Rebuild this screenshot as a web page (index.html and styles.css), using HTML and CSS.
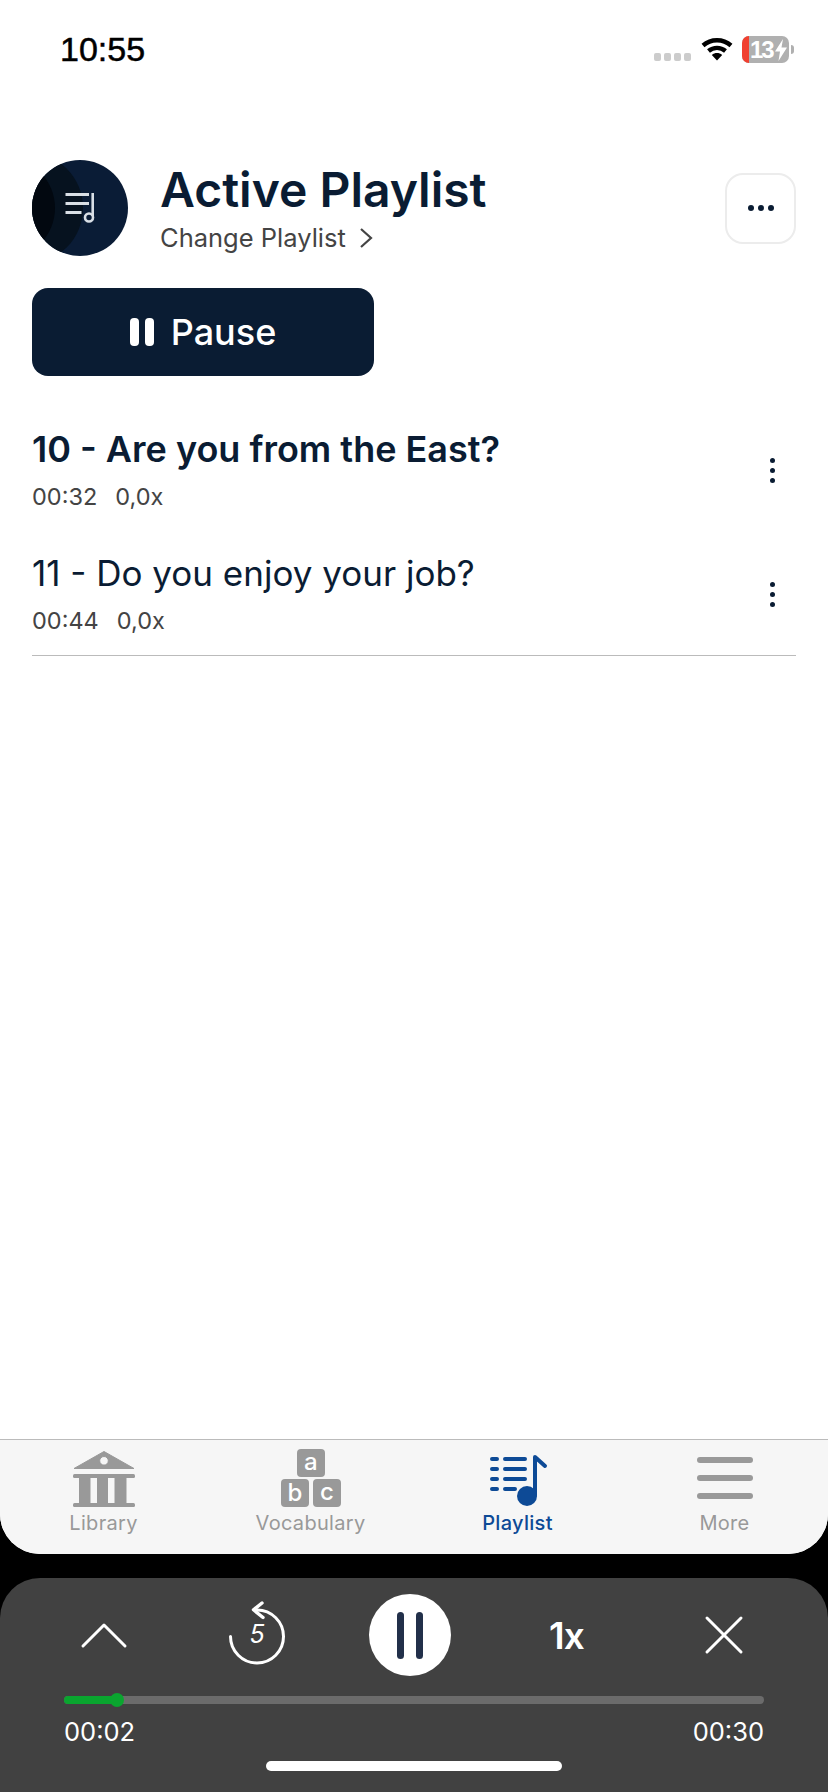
FILE: index.html
```html
<!DOCTYPE html>
<html lang="en">
<head>
    <meta charset="UTF-8">
    <meta name="viewport" content="width=device-width, initial-scale=1.0">
    <title>Active Playlist</title>
    <link rel="stylesheet" href="styles.css">
</head>
<body>
    <div class="app">
        <div class="screen">
            <div class="status-bar">
                <span class="clock">10:55</span>
                <div class="status-icons">
                    <div class="signal"><i></i><i></i><i></i><i></i></div>
                    <svg class="wifi" viewBox="0 0 32 24" width="32" height="24">
                        <path d="M2 8.500C10 1.500 22 1.500 30 8.500" fill="none" stroke="#000" stroke-width="4.400"/>
                        <path d="M7.500 14C12.500 9.800 19.500 9.800 24.500 14" fill="none" stroke="#000" stroke-width="4.400"/>
                        <path d="M10.800 18L16 23.600L21.200 18C18 15.400 14 15.400 10.800 18Z" fill="#000"/>
                    </svg>
                    <div class="battery">
                        <div class="battery-low"></div>
                        <span class="battery-text">13</span>
                        <svg class="bolt" viewBox="0 0 12 22" width="12" height="22">
                            <path d="M8 0L0 12.500H5L3.500 22L12 8.500H6.500Z" fill="#fff"/>
                        </svg>
                    </div>
                    <div class="battery-nub"></div>
                </div>
            </div>

            <main class="content">
                <header class="head">
                    <svg class="avatar" viewBox="0 0 96 96" width="96" height="96">
                        <defs><clipPath id="disc"><circle cx="48" cy="48" r="48"/></clipPath></defs>
                        <g clip-path="url(#disc)">
                            <rect width="96" height="96" fill="#0a1c36"/>
                            <circle cx="-5" cy="48" r="56" fill="#06121f"/>
                            <circle cx="-28" cy="48" r="51" fill="#020810"/>
                        </g>
                        <path d="M33.500 34.500H57M33.500 43.500H57M33.500 52.500H49.500" fill="none" stroke="#d9dfe6" stroke-width="3"/>
                        <path d="M60.700 33V56" fill="none" stroke="#d9dfe6" stroke-width="2.600"/>
                        <circle cx="57" cy="57.500" r="4" fill="none" stroke="#d9dfe6" stroke-width="2.600"/>
                    </svg>
                    <div class="head-text">
                        <h1>Active Playlist</h1>
                        <div class="change">
                            <span>Change Playlist</span>
                            <svg viewBox="0 0 14 22" width="14" height="22">
                                <path d="M2 2L12 11L2 20" fill="none" stroke="#444" stroke-width="2.200"/>
                            </svg>
                        </div>
                    </div>
                    <button class="more-btn" type="button" aria-label="More">
                        <i></i><i></i><i></i>
                    </button>
                </header>

                <button class="pause-btn" type="button">
                    <span class="pause-bars"><i></i><i></i></span>
                    Pause
                </button>

                <div class="tracks">
                    <div class="track">
                        <div class="track-info">
                            <div class="track-title active">10 - Are you from the East?</div>
                            <div class="track-meta"><span>00:32</span><span>0,0x</span></div>
                        </div>
                        <div class="kebab"><i></i><i></i><i></i></div>
                    </div>
                    <div class="track">
                        <div class="track-info">
                            <div class="track-title">11 - Do you enjoy your job?</div>
                            <div class="track-meta"><span>00:44</span><span>0,0x</span></div>
                        </div>
                        <div class="kebab"><i></i><i></i><i></i></div>
                    </div>
                </div>
            </main>

            <nav class="tabs">
                <div class="tab">
                    <svg viewBox="0 0 62 56" width="62" height="56">
                        <path fill-rule="evenodd" d="M31 0.500L61 17.500H1ZM31 5.500A4.300 4.300 0 1 0 31 14.100A4.300 4.300 0 1 0 31 5.500Z" fill="#999" stroke="#999" stroke-width="1" stroke-linejoin="round"/>
                        <rect y="23" width="62" height="4" rx="1.500" fill="#999"/>
                        <rect x="6" y="27" width="11.500" height="25" fill="#999"/>
                        <rect x="24" y="27" width="11" height="25" fill="#999"/>
                        <rect x="41.500" y="27" width="12" height="25" fill="#999"/>
                        <rect y="52" width="62" height="4" rx="1.500" fill="#999"/>
                    </svg>
                    <span>Library</span>
                </div>
                <div class="tab">
                    <svg viewBox="0 -6 60 64" width="60" height="64">
                        <rect x="16" width="28" height="28" rx="4" fill="#999"/>
                        <rect y="30" width="28" height="28" rx="4" fill="#999"/>
                        <rect x="32" y="30" width="28" height="28" rx="4" fill="#999"/>
                        <text class="block-letter" x="30" y="21">a</text>
                        <text class="block-letter" x="14" y="52">b</text>
                        <text class="block-letter" x="46" y="51">c</text>
                    </svg>
                    <span>Vocabulary</span>
                </div>
                <div class="tab current">
                    <svg viewBox="0 0 62 56" width="62" height="56">
                        <path d="M5 8H10M5 18H10M5 28H10M5 38H10M18 8H38M18 18H38M18 28H38M18 38H28" fill="none" stroke="#0d4a96" stroke-width="4" stroke-linecap="round"/>
                        <path d="M48 44V6L58 15" fill="none" stroke="#0d4a96" stroke-width="4" stroke-linecap="round" stroke-linejoin="round"/>
                        <circle cx="40" cy="45" r="10" fill="#0d4a96"/>
                    </svg>
                    <span>Playlist</span>
                </div>
                <div class="tab">
                    <div class="burger"><i></i><i></i><i></i></div>
                    <span>More</span>
                </div>
            </nav>
        </div>

        <section class="player">
            <div class="controls">
                <svg viewBox="0 0 80 40" width="80" height="40">
                    <path d="M19 31L40 10L61 31" fill="none" stroke="#fff" stroke-width="3" stroke-linecap="round" stroke-linejoin="round"/>
                </svg>
                <div class="replay">
                    <svg viewBox="0 0 58 64" width="58" height="64">
                        <path d="M2.500 35.500A26.500 26.500 0 1 0 29 9" fill="none" stroke="#fff" stroke-width="3" stroke-linecap="round"/>
                        <path d="M34 2L25.500 8.800L35 16.500" fill="none" stroke="#fff" stroke-width="3.400" stroke-linecap="round" stroke-linejoin="round"/>
                    </svg>
                    <span class="replay-num">5</span>
                </div>
                <button class="play-btn" type="button" aria-label="Pause"><i></i><i></i></button>
                <span class="speed">1x</span>
                <svg viewBox="0 0 80 40" width="80" height="40">
                    <path d="M23 37L57 3M23 3L57 37" fill="none" stroke="#fff" stroke-width="3" stroke-linecap="round"/>
                </svg>
            </div>
            <div class="progress">
                <div class="progress-fill"></div>
                <div class="progress-thumb"></div>
            </div>
            <div class="times"><span>00:02</span><span>00:30</span></div>
            <div class="home-bar"></div>
        </section>
    </div>
</body>
</html>
```

FILE: styles.css
```css
* {
    box-sizing: border-box;
}

body {
    margin: 0;
    font-family: Inter, "Noto Sans", Arial, sans-serif;
    background-color: #000;
    color: #0a1c33;
}

i {
    display: block;
}

button {
    font-family: inherit;
    cursor: pointer;
}

.app {
    width: 828px;
    height: 1792px;
    display: flex;
    flex-direction: column;
    overflow: hidden;
}

.screen {
    flex: 0 0 1554px;
    display: flex;
    flex-direction: column;
    background-color: #fff;
    border-radius: 0 0 40px 40px;
    overflow: hidden;
}

/* status bar */
.status-bar {
    height: 100px;
    padding: 29px 34px 0 60px;
    display: flex;
    justify-content: space-between;
    align-items: flex-start;
}

.clock {
    font-family: "Liberation Sans", Arial, sans-serif;
    font-size: 34px;
    line-height: 40px;
    color: #000;
    -webkit-text-stroke: 0.5px #000;
}

.status-icons {
    display: flex;
    align-items: flex-start;
    padding-top: 7px;
}

.signal {
    display: flex;
    gap: 2.5px;
    margin-top: 17px;
    margin-right: 10px;
}

.signal i {
    width: 7.5px;
    height: 8px;
    border-radius: 2px;
    background-color: #ccc;
}

.wifi {
    margin-top: 1px;
    margin-right: 9px;
}

.battery {
    width: 47px;
    height: 27px;
    border-radius: 7px;
    background-color: #b0b0b0;
    display: flex;
    align-items: center;
    overflow: hidden;
}

.battery-low {
    flex: none;
    width: 7px;
    height: 100%;
    margin-right: 1px;
    background-color: #f04030;
}

.battery-text {
    font-family: "Liberation Sans", Arial, sans-serif;
    font-size: 24px;
    font-weight: 700;
    letter-spacing: -2px;
    color: #fff;
}

.bolt {
    flex: none;
    margin-left: 2px;
}

.battery-nub {
    width: 3px;
    height: 9px;
    margin: 9px 0 0 2px;
    border-radius: 0 3px 3px 0;
    background-color: #b0b0b0;
}

/* page content */
.content {
    flex: 1;
    padding: 60px 32px 0;
}

.head {
    display: flex;
    align-items: center;
}

.avatar {
    flex: none;
    margin-right: 32px;
}

.head-text {
    flex: 1;
}

.head-text h1 {
    margin: 0;
    font-size: 48px;
    line-height: 54px;
    font-weight: 600;
}

.change {
    display: flex;
    align-items: center;
    gap: 13px;
    margin-top: 5px;
    font-size: 25.5px;
    line-height: 32px;
    color: #444;
}

.more-btn {
    width: 71px;
    height: 71px;
    padding: 0;
    display: flex;
    justify-content: center;
    align-items: center;
    gap: 4px;
    background-color: #fff;
    border: 2px solid #ececec;
    border-radius: 18px;
}

.more-btn i {
    width: 6px;
    height: 6px;
    border-radius: 50%;
    background-color: #0a1c33;
}

.pause-btn {
    width: 342px;
    height: 88px;
    margin-top: 32px;
    display: flex;
    justify-content: center;
    align-items: center;
    gap: 17px;
    border: none;
    border-radius: 16px;
    background-color: #0a1c33;
    color: #fff;
    font-size: 36px;
    font-weight: 500;
}

.pause-bars {
    display: flex;
    gap: 6px;
}

.pause-bars i {
    width: 9px;
    height: 28px;
    border-radius: 4px;
    background-color: #fff;
}

.tracks {
    margin-top: 12px;
    padding-bottom: 19px;
    border-bottom: 1px solid #bbb;
}

.track {
    height: 124px;
    padding: 39px 0 1px;
    display: flex;
    justify-content: space-between;
    align-items: center;
}

.track-title {
    font-size: 35px;
    line-height: 44px;
    font-weight: 400;
}

.track-title.active {
    font-size: 36px;
    font-weight: 600;
}

.track-meta {
    display: flex;
    gap: 18px;
    margin-top: 11px;
    font-size: 23.5px;
    line-height: 30px;
    color: #444;
}

.kebab {
    display: flex;
    flex-direction: column;
    gap: 5px;
    margin: 2px 21px 0 0;
}

.kebab i {
    width: 5px;
    height: 5px;
    border-radius: 50%;
    background-color: #0a1c33;
}

/* bottom tabs */
.tabs {
    height: 115px;
    display: grid;
    grid-template-columns: repeat(4, 207px);
    border-top: 1px solid #bbb;
    background-color: #f6f6f6;
}

.tab {
    height: 114px;
    display: flex;
    flex-direction: column;
    align-items: center;
    justify-content: flex-end;
    padding-bottom: 19px;
    font-size: 20px;
    line-height: 24px;
    letter-spacing: 0.3px;
    color: #999;
}

.tab svg {
    display: block;
    margin-bottom: 4px;
}

.tab.current {
    color: #0d4a96;
    font-weight: 500;
}

.block-letter {
    font-family: Inter, sans-serif;
    font-size: 24px;
    font-weight: 500;
    fill: #fff;
    text-anchor: middle;
}

.burger {
    width: 56px;
    height: 42px;
    margin-bottom: 12px;
    display: flex;
    flex-direction: column;
    justify-content: space-between;
}

.burger i {
    height: 6px;
    border-radius: 3px;
    background-color: #999;
}

/* player */
.player {
    flex: 0 0 214px;
    margin-top: 24px;
    padding: 16px 64px 0;
    border-radius: 40px 40px 0 0;
    background-color: #414141;
    color: #fff;
}

.controls {
    height: 82px;
    display: grid;
    grid-template-columns: 153px 153px 157px 157px 80px;
    align-items: center;
}

.replay {
    position: relative;
    width: 58px;
    height: 64px;
    margin-left: 11px;
    margin-top: -4px;
}

.replay svg {
    display: block;
}

.replay-num {
    position: absolute;
    left: 0;
    right: 0;
    top: 17px;
    text-align: center;
    font-size: 25px;
    line-height: 32px;
    font-style: italic;
}

.play-btn {
    width: 82px;
    height: 82px;
    padding: 0;
    margin-left: -1px;
    display: flex;
    justify-content: center;
    align-items: center;
    gap: 12px;
    border: none;
    border-radius: 50%;
    background-color: #fff;
}

.play-btn i {
    width: 7px;
    height: 47px;
    border-radius: 4px;
    background-color: #22304a;
}

.speed {
    padding-left: 22px;
    font-size: 37px;
    font-weight: 600;
    letter-spacing: -1px;
}

.progress {
    position: relative;
    height: 8px;
    margin-top: 20px;
    border-radius: 4px;
    background-color: #6b6b6b;
}

.progress-fill {
    width: 53px;
    height: 100%;
    border-radius: 4px;
    background-color: #0aa52f;
}

.progress-thumb {
    position: absolute;
    left: 46px;
    top: -3px;
    width: 14px;
    height: 14px;
    border-radius: 50%;
    background-color: #0aa52f;
}

.times {
    display: flex;
    justify-content: space-between;
    margin-top: 13px;
    font-size: 25.5px;
    line-height: 30px;
}

.home-bar {
    width: 296px;
    height: 10px;
    margin: 14px 0 0 202px;
    border-radius: 5px;
    background-color: #fff;
}
```
